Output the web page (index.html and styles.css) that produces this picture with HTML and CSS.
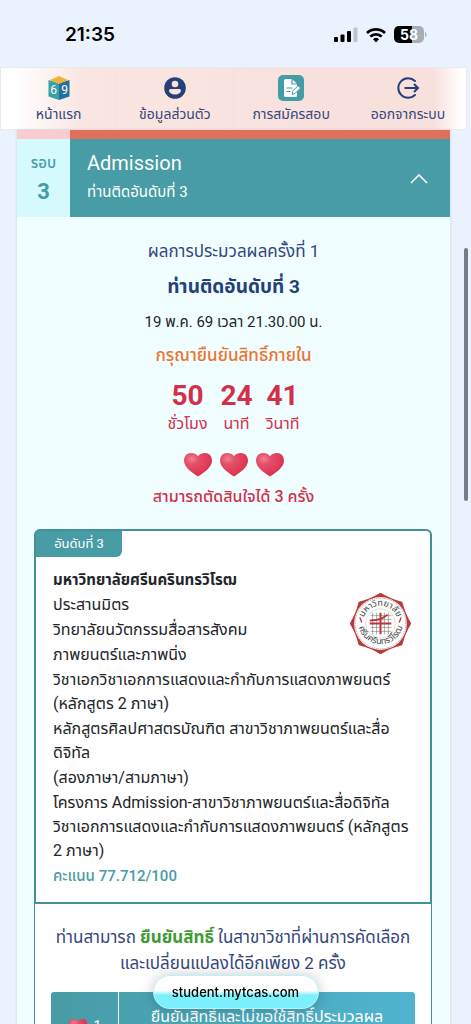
FILE: index.html
```html
<!DOCTYPE html>
<html lang="th">

<head>
    <meta charset="UTF-8">
    <meta name="viewport" content="width=device-width, initial-scale=1.0">
    <title>myTCAS</title>
    <link rel="stylesheet" href="styles.css">
</head>

<body>
    <!-- Shared shapes -->
    <svg class="svg-defs" aria-hidden="true">
        <defs>
            <radialGradient id="heart-fill" cx="0.28" cy="0.25" r="0.8">
                <stop offset="0" stop-color="#f4808f" />
                <stop offset="0.3" stop-color="#e4506b" />
                <stop offset="1" stop-color="#dc2f4c" />
            </radialGradient>
            <symbol id="heart" viewBox="0 0 30 26">
                <path d="M15 24.500C9 20.500 1 15.500 1 8.500C1 4 4 1 8 1c3 0 5.500 1 7 3.200C16.500 2 19 1 22 1c4 0 7 3 7 7.500c0 7-8 12-14 16z" fill="url(#heart-fill)" />
            </symbol>
        </defs>
    </svg>

    <div class="status-bar">
        <span class="status-time">21:35</span>
        <div class="status-icons">
            <svg width="24" height="16" viewBox="0 0 24 16">
                <rect x="0" y="10" width="4" height="5" rx="1" />
                <rect x="6.500" y="7.500" width="4" height="7.500" rx="1" />
                <rect x="13" y="4" width="4" height="11" rx="1" />
                <rect x="19.500" y="0.500" width="4" height="14.500" rx="1" fill="#bcc3cc" />
            </svg>
            <svg width="20" height="16" viewBox="0 0 20 16" fill="none" stroke="#000" stroke-width="2.800">
                <path d="M1 6a13 13 0 0 1 18 0" />
                <path d="M4.300 9.600a8.300 8.300 0 0 1 11.400 0" />
                <path d="M10 15.500l-3-3.300a4.500 4.500 0 0 1 6 0z" fill="#000" stroke="none" />
            </svg>
            <svg width="33" height="17" viewBox="0 0 33 17">
                <path d="M5 0h13v17H5a5 5 0 0 1-5-5V5a5 5 0 0 1 5-5z" />
                <path d="M18 0h7a5 5 0 0 1 5 5v7a5 5 0 0 1-5 5h-7z" fill="#a6aeb8" />
                <path d="M31 6c2 .5 2 4.500 0 5z" fill="#a6aeb8" />
                <text x="15" y="13.500" class="battery-text">58</text>
            </svg>
        </div>
    </div>

    <nav class="top-nav">
        <a href="#" class="nav-item">
            <svg width="24" height="26" viewBox="0 0 24 26">
                <path d="M1.500 5L12 8v17L1.500 21.500z" fill="#3ba0a5" />
                <path d="M22.500 5L12 8v17l10.500-3.500z" fill="#246f9c" />
                <path d="M12 1l9 4-9 4-9-4z" fill="#f0b43c" />
                <text x="6.500" y="18.500" class="book-digit">6</text>
                <text x="17.500" y="18.500" class="book-digit">9</text>
            </svg>
            <span>หน้าแรก</span>
        </a>
        <a href="#" class="nav-item">
            <svg width="24" height="26" viewBox="0 0 24 26">
                <circle cx="12" cy="13" r="10.800" fill="#253f78" />
                <circle cx="12" cy="9" r="3.300" fill="#f9e1dc" />
                <path d="M6 15.500q0-1.500 1.500-1.500h9q1.500 0 1.500 1.500c0 2-2.500 4-6 4s-6-2-6-4z" fill="#f9e1dc" />
            </svg>
            <span>ข้อมูลส่วนตัว</span>
        </a>
        <a href="#" class="nav-item">
            <svg width="26" height="26" viewBox="0 0 26 26">
                <rect width="26" height="26" rx="5" fill="#439da5" />
                <path d="M6 5.500Q6 4 7.500 4H14l5 5v11.500q0 1.500-1.500 1.500h-10Q6 22 6 20.500z" fill="#fff" />
                <path d="M14 4v5h5M8.500 13h6M8.500 16.500h4" fill="none" stroke="#439da5" stroke-width="1.200" />
                <path d="M14 19.500l.8-3.600 5.400-5.200 2.300 2.300-5.300 5.400z" fill="#fff" stroke="#439da5" />
            </svg>
            <span>การสมัครสอบ</span>
        </a>
        <a href="#" class="nav-item">
            <svg width="24" height="26" viewBox="0 0 24 26" fill="none" stroke="#253f78" stroke-width="2">
                <path d="M19 6a9.800 9.800 0 1 0 0 14" stroke-linecap="round" />
                <path d="M8.500 13H22M18 9l4 4-4 4" />
            </svg>
            <span>ออกจากระบบ</span>
        </a>
    </nav>

    <main class="round-list">
        <div class="round-peek"></div>
        <section class="round">
            <header class="round-header">
                <div class="round-number">
                    <span class="round-label">รอบ</span>
                    <strong>3</strong>
                </div>
                <div class="round-title">
                    <div>
                        <h1>Admission</h1>
                        <p>ท่านติดอันดับที่ 3</p>
                    </div>
                    <button class="round-toggle" aria-label="ย่อ">
                        <svg width="18" height="11" viewBox="0 0 18 11" fill="none" stroke="#fff" stroke-width="1.600">
                            <path d="M1 10l8-8 8 8" />
                        </svg>
                    </button>
                </div>
            </header>

            <div class="result">
                <p class="result-round">ผลการประมวลผลครั้งที่ 1</p>
                <h2 class="result-rank">ท่านติดอันดับที่ 3</h2>
                <p class="result-date">19 พ.ค. 69 เวลา 21.30.00 น.</p>
                <p class="result-confirm">กรุณายืนยันสิทธิ์ภายใน</p>
                <div class="countdown">
                    <div><strong>50</strong><span>ชั่วโมง</span></div>
                    <div><strong>24</strong><span>นาที</span></div>
                    <div><strong>41</strong><span>วินาที</span></div>
                </div>
                <div class="hearts">
                    <svg width="30" height="26"><use href="#heart" /></svg>
                    <svg width="30" height="26"><use href="#heart" /></svg>
                    <svg width="30" height="26"><use href="#heart" /></svg>
                </div>
                <p class="hearts-text">สามารถตัดสินใจได้ 3 ครั้ง</p>
            </div>

            <article class="choice">
                <div class="choice-card">
                    <span class="choice-tag">อันดับที่ 3</span>
                    <div class="choice-body">
                        <svg class="choice-seal" width="63" height="63" viewBox="0 0 64 64">
                            <path d="M32 3Q41.600 8.900 52.500 11.500Q55.100 22.400 61 32Q55.100 41.600 52.500 52.500Q41.600 55.100 32 61Q22.400 55.100 11.500 52.500Q8.900 41.600 3 32Q8.900 22.400 11.500 11.500Q22.400 8.900 32 3z" fill="#b93a38" stroke="#b93a38" stroke-width="4" stroke-linejoin="round" />
                            <circle cx="32" cy="32" r="26.800" fill="#fff" />
                            <circle cx="32" cy="32" r="25.800" fill="none" stroke="#777" stroke-width="0.800" stroke-dasharray="1 1" />
                            <circle cx="32" cy="32" r="15" fill="none" stroke="#c9c9c9" stroke-width="0.600" />
                            <path d="M22 24h21M22 28h21M22 36h21M22 40h21M24 21v22M28 21v22M36 21v22M40 21v22" stroke="#777" stroke-width="0.600" />
                            <path d="M21 32h22M32 21v22" stroke="#bd3436" stroke-width="2" />
                            <path d="M21 29c8 0 13-1 18-6" fill="none" stroke="#bd3436" stroke-width="1.800" />
                            <path d="M11 26l2 5M53 26l-2 5" stroke="#bd3436" stroke-width="1.300" />
                            <path id="seal-top" d="M14 32a18 18 0 0 1 36 0" fill="none" />
                            <path id="seal-bottom" d="M9 30a23 23 0 0 0 46 0" fill="none" />
                            <text class="seal-text"><textPath href="#seal-top" startOffset="50%">มหาวิทยาลัย</textPath></text>
                            <text class="seal-text"><textPath href="#seal-bottom" startOffset="50%">ศรีนครินทรวิโรฒ</textPath></text>
                        </svg>
                        <h3>มหาวิทยาลัยศรีนครินทรวิโรฒ</h3>
                        <p>ประสานมิตร</p>
                        <p>วิทยาลัยนวัตกรรมสื่อสารสังคม</p>
                        <p>ภาพยนตร์และภาพนิ่ง</p>
                        <p>วิชาเอกวิชาเอกการแสดงและกำกับการแสดงภาพยนตร์<br>(หลักสูตร 2 ภาษา)</p>
                        <p>หลักสูตรศิลปศาสตรบัณฑิต สาขาวิชาภาพยนตร์และสื่อ<br>ดิจิทัล</p>
                        <p>(สองภาษา/สามภาษา)</p>
                        <p>โครงการ Admission-สาขาวิชาภาพยนตร์และสื่อดิจิทัล<br>วิชาเอกการแสดงและกำกับการแสดงภาพยนตร์ (หลักสูตร<br>2 ภาษา)</p>
                        <p class="choice-score">คะแนน 77.712/100</p>
                    </div>
                </div>
                <div class="choice-action">
                    <p>ท่านสามารถ <strong>ยืนยันสิทธิ์</strong> ในสาขาวิชาที่ผ่านการคัดเลือก<br>และเปลี่ยนแปลงได้อีกเพียง 2 ครั้ง</p>
                    <button class="confirm-button">
                        <span class="confirm-cost">
                            <svg width="20" height="18"><use href="#heart" /></svg>
                            <span>1</span>
                        </span>
                        <span class="confirm-text">ยืนยันสิทธิ์และไม่ขอใช้สิทธิ์ประมวลผล</span>
                    </button>
                </div>
            </article>
        </section>
    </main>

    <div class="scroll-thumb"></div>
    <div class="address-pill">student.mytcas.com</div>
</body>

</html>
```
FILE: styles.css
```css
* {
    box-sizing: border-box;
}

body {
    margin: 0;
    height: 100vh;
    overflow: hidden;
    background-color: #eaf2fd;
    color: #212529;
    font-family: Roboto, "Noto Sans Thai", "Noto Sans", sans-serif;
    font-size: 16px;
    line-height: 24px;
}

h1, h2, h3, p {
    margin: 0;
    font-weight: 400;
}

svg {
    display: block;
}

.svg-defs {
    position: absolute;
    width: 0;
    height: 0;
}

.status-bar {
    display: flex;
    justify-content: space-between;
    align-items: center;
    height: 67px;
    padding: 2px 44px 0 65px;
    color: #000;
}

.status-time {
    font-family: Inter, sans-serif;
    font-size: 19px;
    font-weight: 600;
}

.status-icons {
    display: flex;
    align-items: center;
    gap: 8px;
}

.battery-text {
    fill: #fff;
    font-family: Inter, sans-serif;
    font-size: 14px;
    font-weight: 700;
    text-anchor: middle;
}

.top-nav {
    display: grid;
    grid-template-columns: repeat(4, 1fr);
    height: 63px;
    margin: 0 4px 0 0;
    border: 1px solid #e9e9ef;
    background: linear-gradient(90deg, #fff 3%, #f9e5e1 18%, #f8e0dc 93%, #fff 99%);
}

.nav-item {
    display: flex;
    flex-direction: column;
    align-items: center;
    gap: 1px;
    padding-top: 7px;
    border-right: 1px solid #f4e0df;
    color: #34477c;
    font-size: 14px;
    text-decoration: none;
    white-space: nowrap;
}

.nav-item:last-child {
    border-right: none;
}

.book-digit {
    fill: #fff;
    font-size: 12px;
    text-anchor: middle;
}

.round-list {
    margin: 0 21px 0 17px;
    background-color: #f0feff;
    box-shadow: 0 0 3px rgba(60, 100, 140, 0.2);
}

.round-peek {
    height: 9px;
    background: linear-gradient(90deg, #f9cdcd 53px, #e1705a 53px);
}

.round-header {
    display: flex;
    height: 78px;
}

.round-number {
    width: 53px;
    padding-top: 12px;
    background-color: #d5fafe;
    color: #479ca5;
    font-size: 15px;
    font-weight: 500;
    text-align: center;
}

.round-label,
.round-number strong {
    display: block;
}

.round-number strong {
    font-size: 22px;
    line-height: 34px;
}

.round-title {
    display: flex;
    flex: 1;
    align-items: center;
    justify-content: space-between;
    padding: 0 22px 0 17px;
    background-color: #479ca5;
    color: #fff;
}

.round-title h1 {
    font-size: 20px;
    line-height: 28px;
}

.round-title p {
    font-size: 15px;
    line-height: 30px;
}

.round-toggle {
    padding: 0;
    border: none;
    background: none;
    cursor: pointer;
}

.result {
    padding-top: 17px;
    text-align: center;
    white-space: nowrap;
}

.result-round {
    color: #34477c;
    font-size: 17px;
    line-height: 34px;
}

.result-rank {
    color: #253f78;
    font-size: 19px;
    font-weight: 700;
    line-height: 38px;
}

.result-date {
    font-size: 15px;
    line-height: 32px;
}

.result-confirm {
    color: #ec7430;
    font-size: 17px;
    font-weight: 500;
    line-height: 34px;
}

.countdown {
    display: flex;
    justify-content: center;
    gap: 13px;
    padding-top: 8px;
    color: #d32f4b;
}

.countdown strong {
    display: block;
    font-size: 28px;
    line-height: 32px;
}

.hearts {
    display: flex;
    justify-content: center;
    gap: 6px;
    margin-top: 16px;
}

.hearts-text {
    color: #d32f4b;
    font-size: 16px;
    font-weight: 500;
    line-height: 38px;
}

.choice {
    margin: 13px 18px 0 17px;
}

.choice-card {
    border: 2px solid #439099;
    border-radius: 6px 6px 0 0;
    background-color: #fff;
}

.choice-tag {
    display: block;
    width: 86px;
    border-radius: 0 0 6px 0;
    background-color: #479ca5;
    color: #fff;
    font-size: 13px;
    line-height: 26px;
    text-align: center;
}

.choice-body {
    padding: 11px 18px 14px 17px;
    white-space: nowrap;
}

.choice-body p {
    margin-top: 1px;
}

.choice-body h3 {
    font-size: 15px;
    font-weight: 700;
}

.choice-seal {
    float: right;
    margin-top: 24px;
}

.seal-text {
    fill: #444;
    font-size: 9px;
    text-anchor: middle;
}

.choice-body .choice-score {
    color: #479ca5;
    font-size: 15px;
    font-weight: 500;
}

.choice-action {
    padding: 20px 16px;
    border: 1px solid #439099;
    border-top: none;
    background-color: #fff;
    color: #34477c;
    font-size: 17px;
    line-height: 26px;
    text-align: center;
    white-space: nowrap;
}

.choice-action strong {
    color: #3f9b35;
}

.confirm-button {
    display: flex;
    width: 100%;
    height: 80px;
    margin-top: 16px;
    padding: 0;
    border: none;
    border-radius: 3px;
    background: linear-gradient(90deg, #479ca5, #50b4d0);
    color: #fff;
    font-family: inherit;
    font-size: 16px;
    cursor: pointer;
}

.confirm-cost {
    display: flex;
    align-items: flex-start;
    justify-content: center;
    gap: 6px;
    width: 68px;
    height: 80px;
    padding-top: 26px;
    border-right: 1px solid #fff;
    font-size: 14px;
}

.confirm-text {
    flex: 1;
    align-self: flex-start;
    padding-top: 13px;
}

.scroll-thumb {
    position: fixed;
    top: 248px;
    right: 3px;
    width: 4px;
    height: 253px;
    border-radius: 2px;
    background-color: #777d86;
}

.address-pill {
    position: fixed;
    bottom: 15px;
    left: 50%;
    width: 166px;
    transform: translateX(-50%);
    border: 1px solid #b8f3fb;
    border-radius: 17px;
    background: linear-gradient(#fff 45%, #7df0fd 60%);
    box-shadow: 0 0 14px rgba(0, 0, 0, 0.22);
    color: #000;
    font-family: Inter, sans-serif;
    font-size: 13px;
    font-weight: 500;
    line-height: 32px;
    text-align: center;
}
```
